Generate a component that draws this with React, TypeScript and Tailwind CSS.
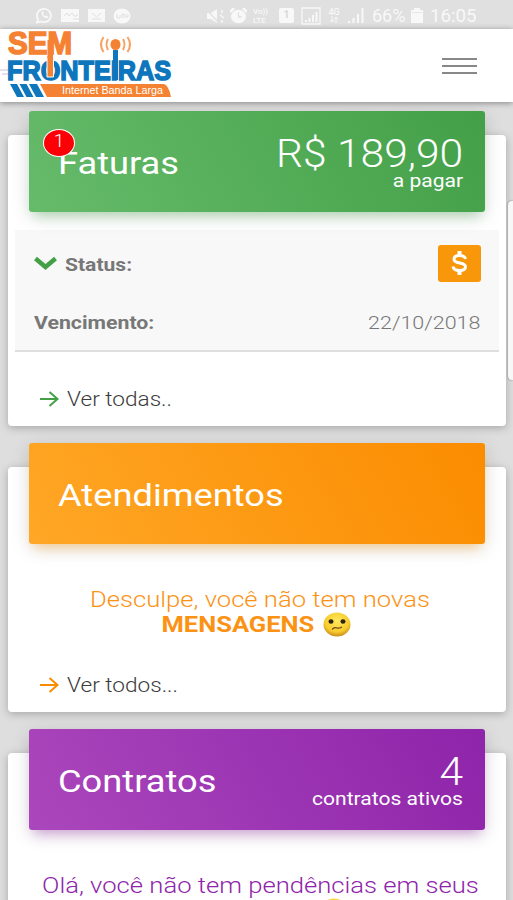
import { ReactNode } from "react";

const StatusBar = () => {
  return (
    <div className="flex h-[29px] shrink-0 items-center justify-between bg-[#e0e0e0] pt-[2px] pr-9 pl-[35px] text-[#f8f8f8]">
      <div className="flex items-center gap-[7px]">
        <svg width="19" height="17" viewBox="0 0 19 17" fill="none">
          <path
            d="M2 15.5 3 12A7 6.6 0 1 1 6 14.5Z"
            stroke="currentColor"
            strokeWidth="1.7"
          />
          <path
            d="M6.5 5c0 4 2.500 6 6 6.300l.8-1.800-2-1-1 .8C9 8.800 8.400 8 8 7l.8-.8L8 4.300Z"
            fill="currentColor"
          />
        </svg>
        <svg width="20" height="15" viewBox="0 0 20 15">
          <path d="M0 1h18v13H0Z" fill="currentColor" />
          <path d="M3 8l3-3 2 3 3-3 2 3h3v-2M12 11h8" stroke="#e0e0e0" fill="none" />
        </svg>
        <svg width="18" height="15" viewBox="0 0 18 15">
          <path d="M0 1h17v13H0Z" fill="currentColor" />
          <path d="M4 5l4.500 4L13 5M4 11h9" stroke="#e0e0e0" fill="none" />
        </svg>
        <svg width="18" height="16" viewBox="0 0 18 16">
          <ellipse cx="9" cy="8" rx="8.500" ry="7.500" fill="currentColor" />
          <path d="M4 6v4h3V7M9 10V6h2v4M13 6v3h2V6" stroke="#e0e0e0" fill="none" />
        </svg>
      </div>
      <div className="flex items-center">
        <svg width="19" height="16" viewBox="0 0 19 16">
          <path d="M1 5h4l6-4v14l-6-4H1Z" fill="currentColor" />
          <path d="M0 1l13 14" stroke="#e0e0e0" strokeWidth="1.300" />
          <path d="M16 2v3M14 7l4 3M16 12v3" stroke="currentColor" strokeWidth="1.500" />
        </svg>
        <svg className="ml-[5px]" width="17" height="16" viewBox="0 0 17 16">
          <path d="M0 4 4 0M17 4l-4-4" stroke="currentColor" strokeWidth="2.500" />
          <ellipse cx="8.500" cy="8.500" rx="7.500" ry="6.800" fill="currentColor" />
          <path d="M8.500 4.500v4.500h3" stroke="#e0e0e0" strokeWidth="1.300" fill="none" />
        </svg>
        <div className="ml-[6px] w-5 font-['Roboto',sans-serif] text-[8px] leading-[9px] font-medium">
          <div>Vo))</div>
          <div>LTE</div>
        </div>
        <div className="ml-[6px] flex h-[15px] w-[15px] items-center justify-center rounded-[2px] bg-[#f8f8f8] font-['Roboto',sans-serif] text-[11px] font-bold text-[#d8d8d8]">
          1
        </div>
        <svg className="ml-[7px]" width="20" height="18" viewBox="0 0 20 18">
          <path d="M1 1h18v16H1Z" stroke="currentColor" strokeWidth="1.300" fill="none" />
          <path d="M5 15v-2M8.500 15v-4M12 15V8M15.500 15V5" stroke="currentColor" strokeWidth="2" />
        </svg>
        <div className="ml-[6px] w-[14px] text-center font-['Roboto',sans-serif] text-[9px] leading-[8px] font-medium">
          <div>4G</div>
          <svg className="mx-auto" width="10" height="7" viewBox="0 0 10 7">
            <path d="M3 0v6M1 4l2 2 2-2M7 7V1M5 3l2-2 2 2" stroke="currentColor" fill="none" />
          </svg>
        </div>
        <svg className="ml-[6px]" width="18" height="15" viewBox="0 0 18 15">
          <path d="M2 15v-2M6.500 15v-5M11 15V6M15.500 15V0" stroke="currentColor" strokeWidth="2" />
        </svg>
        <div className="ml-[7px] w-[33px] font-['Roboto',sans-serif] text-[18px] leading-4">
          66%
        </div>
        <svg className="ml-[6px]" width="12" height="15" viewBox="0 0 12 15">
          <path d="M0 2h3V0h6v2h3v13H0Z" fill="currentColor" />
          <path d="M1 4.500h10" stroke="#e0e0e0" strokeWidth=".7" />
        </svg>
        <div className="ml-[7px] w-[47px] font-['Roboto',sans-serif] text-[18px] leading-4">
          <span className="inline-block origin-left scale-x-[1.04]">16:05</span>
        </div>
      </div>
    </div>
  );
};

const Logo = () => {
  return (
    <svg
      width="176"
      height="73"
      viewBox="0 29 176 73"
      className="overflow-visible font-['Liberation_Sans',Arial,sans-serif] font-bold"
    >
      <path d="M0 70h8M2 74h6" stroke="#dcd3ea" strokeWidth="1.500" />
      <text
        x="8"
        y="53.500"
        fontSize="31"
        fill="#f58232"
        stroke="#f58232"
        strokeWidth="1.600"
        textLength="64"
        lengthAdjust="spacingAndGlyphs"
      >
        SEM
      </text>
      <text
        x="7"
        y="79.500"
        fontSize="28"
        fill="#0e76bc"
        stroke="#0e76bc"
        strokeWidth="1.600"
        textLength="164"
        lengthAdjust="spacingAndGlyphs"
      >
        FRONTEIRAS
      </text>
      <path d="M113 50h5v30h-5Z" fill="#0e76bc" />
      <path d="M47 56v21h6.500V56" fill="#f58232" stroke="#fff" strokeWidth="1" />
      <path d="M47.500 40h5.500v18h-5.500Z" fill="#f58232" />
      <ellipse cx="115.500" cy="44.500" rx="5" ry="5.500" fill="#f58232" />
      <path
        d="M108 39q-3 5.500 0 11M103.500 37q-5 7.500 0 15M123 39q3 5.500 0 11M127.500 37q5 7.500 0 15"
        stroke="#f58232"
        strokeOpacity=".75"
        strokeWidth="2"
        fill="none"
      />
      <path d="M10 84h7l7 13h-7ZM19.500 84h7l7 13h-7ZM29 84h8l7 13h-8Z" fill="#0e76bc" />
      <path d="M40 84h124q5 2 7 13H47Z" fill="#f58232" />
      <text
        x="62"
        y="94"
        fontSize="10"
        fill="#fff"
        textLength="101"
        lengthAdjust="spacingAndGlyphs"
        className="font-normal"
      >
        Internet Banda Larga
      </text>
    </svg>
  );
};

const Navbar = () => {
  return (
    <header className="relative z-10 flex h-[73px] shrink-0 items-center justify-between bg-white pr-[36px] shadow-[0_1px_6px_rgba(0,0,0,0.4)]">
      <Logo />
      <button className="flex w-[35px] flex-col gap-[5px]">
        <span className="h-[2px] bg-[#888]" />
        <span className="h-[2px] bg-[#888]" />
        <span className="h-[2px] bg-[#888]" />
      </button>
    </header>
  );
};

const ConfusedFace = () => {
  return (
    <svg width="28" height="25" viewBox="0 0 28 25">
      <defs>
        <radialGradient id="face" cx="50%" cy="35%" r="65%">
          <stop offset="0" stopColor="#ffe95e" />
          <stop offset=".7" stopColor="#f8cb2c" />
          <stop offset="1" stopColor="#c98d1a" />
        </radialGradient>
      </defs>
      <ellipse cx="14" cy="12.500" rx="13.500" ry="12" fill="url(#face)" />
      <ellipse cx="8" cy="9.500" rx="2.500" ry="2.200" fill="#2f2411" />
      <ellipse cx="20" cy="9.500" rx="2.500" ry="2.200" fill="#2f2411" />
      <path
        d="M9.500 17q2.500-2 4.500-1 2 .7 4.500-.8"
        stroke="#6b4a12"
        strokeWidth="1.300"
        fill="none"
        strokeLinecap="round"
      />
    </svg>
  );
};

type CardProps = {
  title: string;
  headerClass: string;
  value?: string;
  label?: string;
  badge?: string;
  className: string;
  children: ReactNode;
};

const Card = ({ title, headerClass, value, label, badge, className, children }: CardProps) => {
  return (
    <section
      className={`flex shrink-0 flex-col rounded-[4px] bg-white shadow-[0_2px_8px_rgba(0,0,0,0.25)] ${className}`}
    >
      <div
        className={`relative -mt-6 mr-[21px] ml-[21px] flex h-[101px] shrink-0 items-center justify-between rounded-[3px] pr-[22px] pl-[29px] text-white ${headerClass}`}
      >
        {badge && (
          <span className="absolute top-[18px] left-[14px] z-10 flex h-[28px] w-[32px] items-center justify-center rounded-[50%] border border-white bg-[#fb0007] pb-[3px] text-[19px] font-light">
            {badge}
          </span>
        )}
        <h2 className="origin-left scale-x-[1.17] pt-[5px] text-[31px] leading-9">{title}</h2>
        {value && (
          <div className="flex flex-col items-end pt-[4px]">
            <span className="origin-right scale-x-[1.12] text-[38px] leading-[34px] font-light">{value}</span>
            <span className="origin-right scale-x-[1.17] text-[18px] leading-5">{label}</span>
          </div>
        )}
      </div>
      {children}
    </section>
  );
};

const SeeAll = ({ text, iconClass }: { text: string; iconClass: string }) => {
  return (
    <a className="flex items-center gap-[8px] pl-8 text-[#3c3c3c]">
      <svg
        className={iconClass}
        width="19"
        height="16"
        viewBox="0 0 19 16"
        fill="none"
        stroke="currentColor"
        strokeWidth="2"
      >
        <path d="M0 8h17M9.500 1l8 7-8 7" />
      </svg>
      <span className="origin-left scale-x-[1.13] text-[20px] leading-6 font-light">{text}</span>
    </a>
  );
};

const App = () => {
  return (
    <div className="relative flex h-[900px] w-[513px] flex-col overflow-hidden bg-[#dedede] font-['Roboto',sans-serif]">
      <StatusBar />
      <Navbar />
      <main className="flex flex-col pt-[33px] pr-[7px] pl-2">
        <Card
          title="Faturas"
          value="R$ 189,90"
          label="a pagar"
          badge="1"
          className="h-[291px]"
          headerClass="bg-[linear-gradient(60deg,#66bb6a,#43a047)] shadow-[0_8px_12px_-5px_rgba(76,175,80,0.4),0_4px_20px_rgba(0,0,0,0.12)]"
        >
          <div className="mx-[7px] mt-[18px] flex h-[122px] shrink-0 flex-col border-b-2 border-[#dfdfdf] bg-[#f8f8f8] pr-[19px] pl-[19px] text-[#777]">
            <div className="-mr-px mt-[15px] flex h-9 items-center">
              <svg width="23" height="14" viewBox="0 0 23 14" fill="none">
                <path d="M1.500 2.500l10 8.500 10-8.500" stroke="#43a047" strokeWidth="4.500" />
              </svg>
              <span className="ml-2 origin-left scale-x-[1.14] pt-[3px] text-[18.500px] leading-6 font-bold">
                Status:
              </span>
              <span className="ml-auto flex h-[37px] w-[43px] items-center justify-center rounded-[3px] bg-[#f89709] text-white">
                <svg width="17" height="24" viewBox="0 0 17 24" fill="none" stroke="currentColor">
                  <path
                    d="M14.500 8C14 5.500 12 4.500 8.500 4.500 5 4.500 3 6 3 8.200c0 5.300 11.500 2.300 11.500 7.600 0 2.200-2.200 3.700-6 3.700-3.600 0-6-1.300-6.500-4"
                    strokeWidth="3"
                  />
                  <path d="M8.500 0v4.500M8.500 19.500V24" strokeWidth="4" />
                </svg>
              </span>
            </div>
            <div className="mt-[28px] flex items-center justify-between">
              <span className="origin-left scale-x-[1.15] text-[18.500px] leading-7 font-bold">Vencimento:</span>
              <span className="origin-right scale-x-[1.13] text-[19px] leading-7 font-light">22/10/2018</span>
            </div>
          </div>
          <div className="mt-[35px]">
            <SeeAll text="Ver todas.." iconClass="text-[#43a047]" />
          </div>
        </Card>
        <Card
          title="Atendimentos"
          className="mt-[41px] h-[245px]"
          headerClass="bg-[linear-gradient(60deg,#ffa726,#fb8c00)] shadow-[0_8px_12px_-5px_rgba(255,152,0,0.4),0_4px_20px_rgba(0,0,0,0.12)]"
        >
          <div className="mt-[43px] flex flex-col items-center pl-[6px] text-[22px] leading-[25px] text-[#fb9214]">
            <p className="scale-x-[1.165] font-light">Desculpe, você não tem novas</p>
            <div className="flex items-center gap-[19px] pl-[3px]">
              <strong className="scale-x-[1.16] font-bold">MENSAGENS</strong>
              <ConfusedFace />
            </div>
          </div>
          <div className="mt-[36px]">
            <SeeAll text="Ver todos..." iconClass="text-[#fb8c00]" />
          </div>
        </Card>
        <Card
          title="Contratos"
          value="4"
          label="contratos ativos"
          className="mt-[41px] h-[245px]"
          headerClass="bg-[linear-gradient(60deg,#ab47bc,#8e24aa)] shadow-[0_8px_12px_-5px_rgba(156,39,176,0.4),0_4px_20px_rgba(0,0,0,0.12)]"
        >
          <div className="mt-[43px] flex flex-col items-center pl-[6px] text-[22px] leading-[25px] text-[#8e24aa]">
            <p className="scale-x-[1.165] font-light">Olá, você não tem pendências em seus</p>
            <div className="pl-[148px]">
              <ConfusedFace />
            </div>
          </div>
        </Card>
      </main>
      <div className="absolute top-[201px] right-0 z-20 h-[179px] w-[5px] rounded-l-[4px] bg-[#f7f7f7] shadow-[0_0_2px_rgba(0,0,0,0.45)]" />
    </div>
  );
};

export default App;
